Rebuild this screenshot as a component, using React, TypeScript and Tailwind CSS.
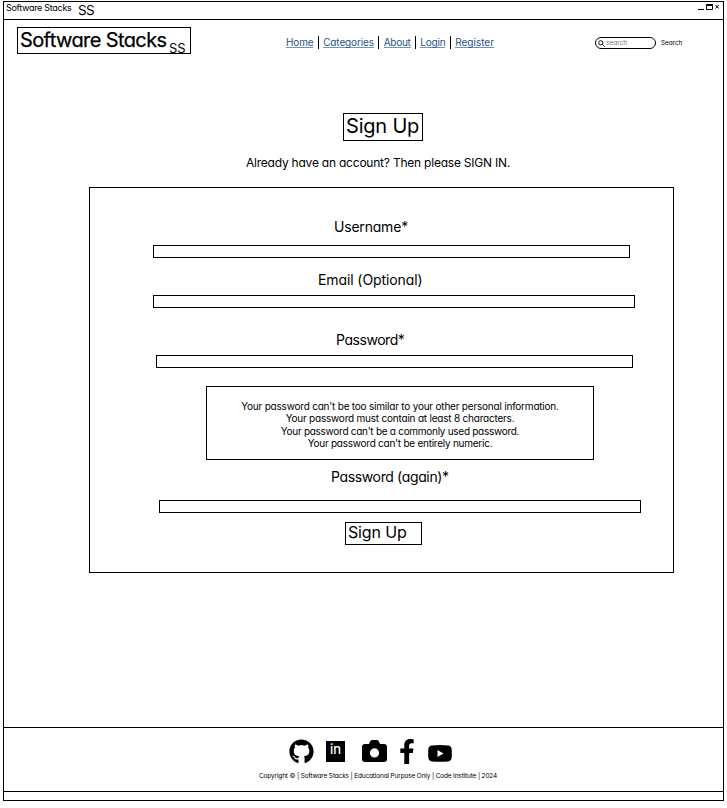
import type { ReactNode } from "react";
import { FaGithub, FaFacebookF } from "react-icons/fa";

function Label({ className, children }: { className: string; children: ReactNode }) {
  return (
    <label className={`block h-5 w-fit whitespace-nowrap text-[14px] leading-5 ${className}`}>{children}</label>
  );
}

function Field({ className }: { className: string }) {
  return <input className={`block h-[13px] border border-black bg-white outline-none ${className}`} />;
}

const Divider = () => <span className="h-[13px] w-px bg-black" />;

function NavLink({ className, children }: { className: string; children: ReactNode }) {
  return (
    <a
      href="#"
      className={`h-[12px] whitespace-nowrap border-b border-[#6c96bd] text-[10px] leading-[12px] text-[#1f5288] ${className}`}
    >
      {children}
    </a>
  );
}

export default function App() {
  return (
    <div className="h-[808px] w-[727px] overflow-hidden bg-white pt-px pl-[3px] font-['Inter',sans-serif] text-black [font-feature-settings:'cv11']">
      <div className="flex h-[800px] w-[721px] flex-col border border-black">
        <header className="flex h-[18px] shrink-0 border-b border-black">
          <span className="ml-[2px] w-[72px] whitespace-nowrap text-[9px] leading-[12px] tracking-[-0.3px]">Software Stacks</span>
          <span className="text-[13.5px] leading-[17px] tracking-[-0.7px]">SS</span>
          <svg className="mt-[1px] mr-[3px] ml-auto" width="22" height="10" viewBox="0 0 22 10" fill="none" stroke="black">
            <path d="M0 6.5h6M8.5 2.5h6v4h-6zM8 1.5h7M17.5 2l3.200 3.500M20.700 2l-3.200 3.500" />
          </svg>
        </header>

        <div className="flex h-[86px] shrink-0 pt-[7px]">
          <div className="ml-[13px] flex h-[27px] w-[174px] border border-black pl-[2px]">
            <span className="w-[149px] whitespace-nowrap text-[20px] leading-[24px] tracking-[-0.6px] [-webkit-text-stroke:0.25px_black]">Software Stacks</span>
            <span className="mt-[13px] h-[12px] text-[13px] leading-[14px] tracking-[-0.2px]">SS</span>
          </div>
          <nav className="mt-[9px] ml-[95px] flex h-[13px] w-[208px] justify-between">
            <NavLink className="tracking-[-0.15px]">Home</NavLink>
            <Divider />
            <NavLink className="tracking-[-0.13px]">Categories</NavLink>
            <Divider />
            <NavLink className="tracking-[-0.25px]">About</NavLink>
            <Divider />
            <NavLink className="tracking-[-0.2px]">Login</NavLink>
            <Divider />
            <NavLink className="tracking-[0px]">Register</NavLink>
          </nav>
          <div className="mt-[10px] ml-[101px] flex h-[12px] w-[61px] items-center rounded-full border border-black pl-[2px]">
            <svg width="7" height="7" viewBox="0 0 7 7" fill="none" stroke="black" strokeWidth="0.9">
              <circle cx="2.8" cy="2.8" r="2.1" />
              <path d="M4.4 4.4l2.3 2.3" />
            </svg>
            <span className="ml-[1px] text-[6.5px] leading-[8px] text-[#777]">search</span>
          </div>
          <span className="mt-[11px] ml-[5px] text-[6.5px] leading-[10px] tracking-[-0.1px]">Search</span>
        </div>

        <main className="flex h-[621px] shrink-0 flex-col">
          <h1 className="mt-[7px] ml-[339px] h-[28px] w-[80px] whitespace-nowrap border border-black pl-[2px] text-[20px] leading-[24px] tracking-[-0.2px]">
            Sign Up
          </h1>
          <p className="mt-[13px] ml-[242px] h-[18px] whitespace-nowrap text-[12px] leading-[18px] tracking-[-0.22px]">
            Already have an account? Then please SIGN IN.
          </p>

          <form className="mt-[15px] ml-[85px] h-[386px] w-[585px] border border-black">
            <Label className="mt-[29px] ml-[244px] tracking-[-0.2px]">Username*</Label>
            <Field className="mt-[8px] ml-[63px] w-[477px]" />
            <Label className="mt-[12px] ml-[228px] tracking-[-0.1px]">Email (Optional)</Label>
            <Field className="mt-[5px] ml-[63px] w-[482px]" />
            <Label className="mt-[22px] ml-[246px] tracking-[-0.45px]">Password*</Label>
            <Field className="mt-[5px] ml-[66px] w-[477px]" />
            <div className="mt-[18px] ml-[116px] h-[74px] w-[388px] border border-black pt-[13px] text-center text-[10px] leading-[12.3px]">
              <p className="tracking-[-0.21px]">Your password can't be too similar to your other personal information.</p>
              <p className="tracking-[-0.21px]">Your password must contain at least 8 characters.</p>
              <p className="tracking-[-0.28px]">Your password can't be a commonly used password.</p>
              <p className="tracking-[-0.25px]">Your password can't be entirely numeric.</p>
            </div>
            <Label className="mt-[7px] ml-[241px] tracking-[-0.36px]">Password (again)*</Label>
            <Field className="mt-[13px] ml-[69px] w-[482px]" />
            <button
              type="button"
              className="mt-[9px] ml-[255px] flex h-[23px] w-[77px] whitespace-nowrap border border-black pl-[2px] text-[16px] leading-[19px] tracking-[-0.15px]"
            >
              Sign Up
            </button>
          </form>
        </main>

        <footer className="flex h-[65px] shrink-0 flex-col border-t border-b border-black">
          <div className="mt-[11px] ml-[285px] flex h-[24px] items-center">
            <FaGithub className="size-[25px]" />
            <span className="ml-[12px] flex h-[21px] w-[19px] items-center justify-center bg-black pb-[3px] text-[13px] leading-none font-medium text-white">
              in
            </span>
            <svg className="ml-[17px]" width="25" height="22" viewBox="0 0 25 22">
              <path
                fillRule="evenodd"
                d="M3 4h4l1-2.5Q8.6 0 10 0h5q1.4 0 2 1.5L18 4h4q3 0 3 3v12q0 3-3 3H3q-3 0-3-3V7q0-3 3-3zM12.5 8.3a4.6 4.6 0 1 0 0 9.2a4.6 4.6 0 1 0 0-9.2z"
              />
            </svg>
            <FaFacebookF className="ml-[12px] h-[25px] w-[16px]" />
            <svg className="mt-[4px] ml-[13px]" width="24" height="17" viewBox="0 0 24 17">
              <path
                fillRule="evenodd"
                d="M4 .5Q12-.4 20 .5Q23.5.8 23.7 4.5Q24 8.5 23.7 12.5Q23.4 16 20 16.5Q12 17.2 4 16.5Q.6 16 .3 12.5Q0 8.5 .3 4.5Q.5 .8 4 .5ZM9.5 5v7l6-3.5z"
              />
            </svg>
          </div>
          <p className="mt-[8px] ml-[255px] whitespace-nowrap text-[6.5px] leading-[10px] tracking-[-0.155px]">
            Copyright © | Software Stacks | Educational Purpose Only | Code Institute | 2024
          </p>
        </footer>
      </div>
    </div>
  );
}
